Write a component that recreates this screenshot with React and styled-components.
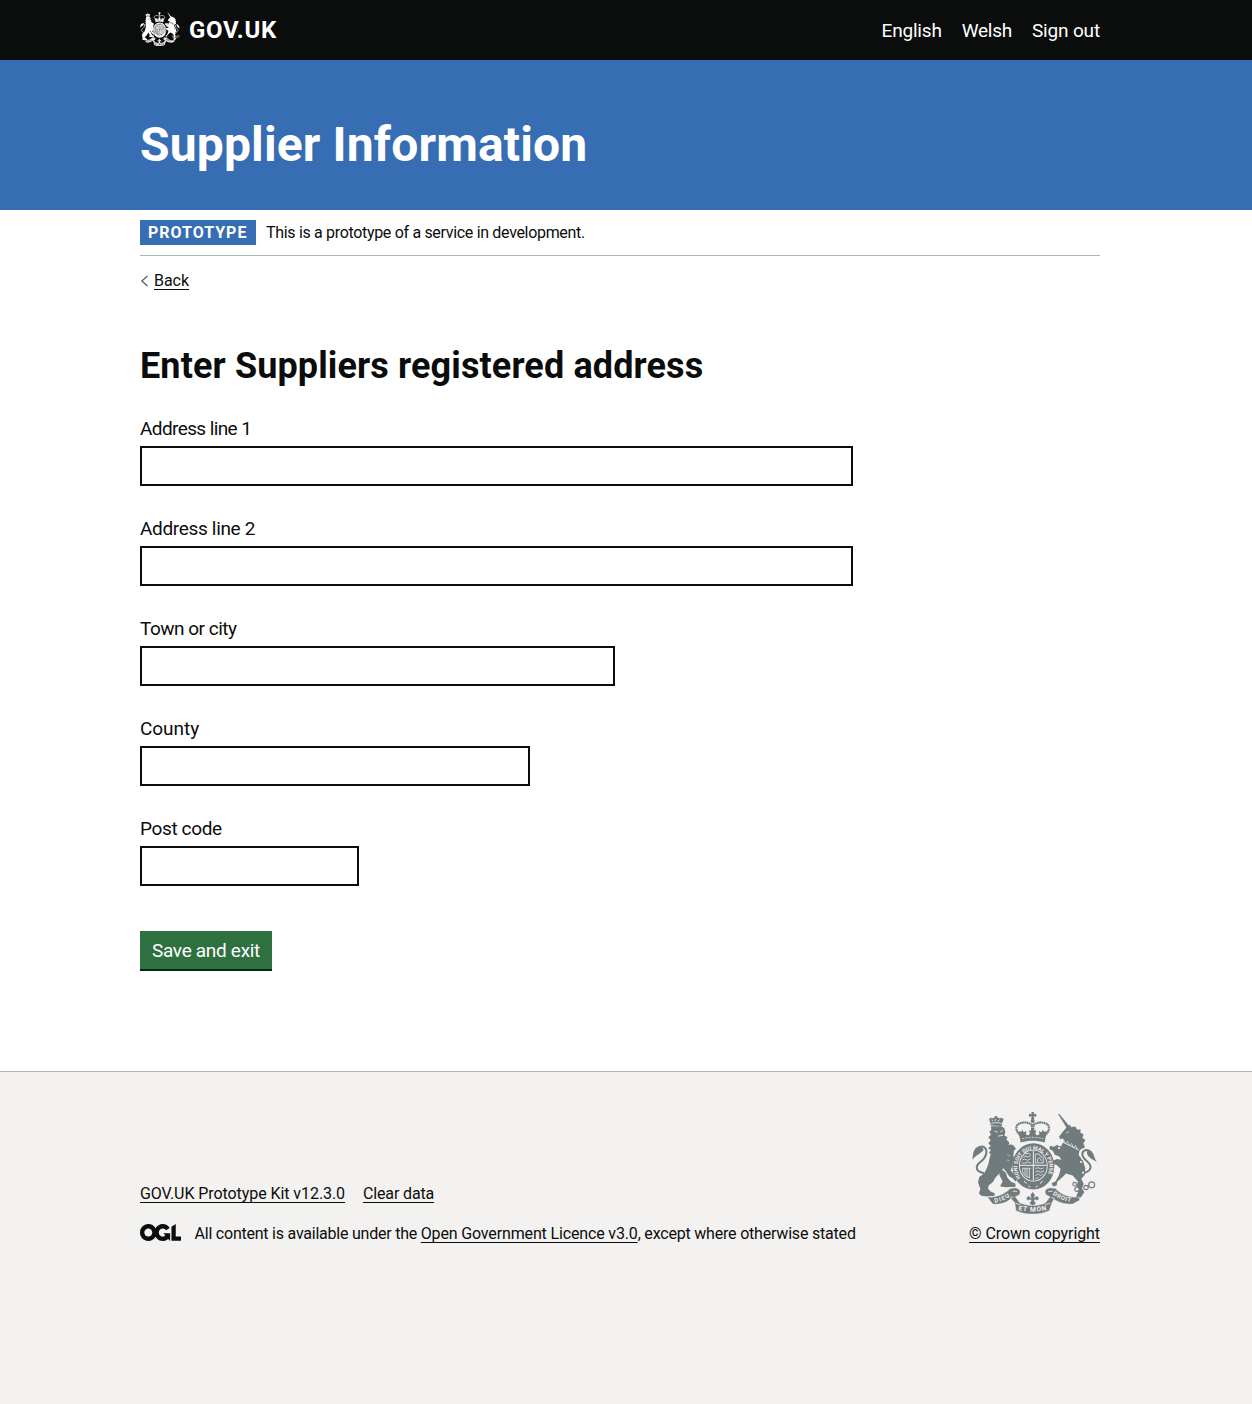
import React from "react";
import styled, { createGlobalStyle } from "styled-components";

const INK = "#0b0c0c";
const BLUE = "#376db3";
const PALE = "#f3f2f1";

const GlobalStyle = createGlobalStyle`
  *, *::before, *::after { box-sizing: border-box; }
  body {
    margin: 0;
    background: ${PALE};
    color: ${INK};
    font-family: Roboto, "Liberation Sans", sans-serif;
    font-size: 19px;
    line-height: 25px;
  }
  a { color: inherit; }
`;

const Page = styled.div`
  min-height: 1404px;
  display: flex;
  flex-direction: column;
`;

const Container = styled.div`
  width: 960px;
  margin-left: 140px;
`;

const Header = styled.header`
  height: 60px;
  background: ${INK};
  color: #fff;
`;

const HeaderRow = styled(Container)`
  height: 60px;
  display: flex;
  justify-content: space-between;
  align-items: center;
`;

const Brand = styled.a`
  display: flex;
  align-items: center;
  gap: 9px;
  text-decoration: none;
`;

const BrandCrest = styled.svg`
  display: block;
  width: 40px;
  height: 34px;
  margin-bottom: 2px;
  color: #fff;
`;

const BrandName = styled.span`
  font-size: 24px;
  font-weight: 700;
  line-height: 30px;
  letter-spacing: 0.7px;
`;

const Nav = styled.nav`
  display: flex;
  gap: 20px;
`;

const NavLink = styled.a`
  text-decoration: none;
  letter-spacing: ${(p) => p.$track}px;
`;

const Banner = styled.div`
  height: 150px;
  background: ${BLUE};
  color: #fff;
  padding-top: 60px;
`;

const BannerTitle = styled.div`
  font-size: 48px;
  line-height: 50px;
  font-weight: 700;
  letter-spacing: 0.15px;
`;

const Body = styled.div`
  background: #fff;
  height: 861px;
`;

const Phase = styled.div`
  height: 46px;
  padding: 10px 0;
  display: flex;
  gap: 10px;
  border-bottom: 1px solid #b1b4b6;
`;

const Tag = styled.strong`
  width: 116px;
  height: 25px;
  padding-left: 8px;
  background: ${BLUE};
  color: #fff;
  font-size: 16px;
  line-height: 25px;
  letter-spacing: 0.98px;
`;

const Small = styled.span`
  font-size: 16px;
  line-height: 25px;
  white-space: pre;
  letter-spacing: ${(p) => p.$track}px;
`;

const Link = styled.a`
  font-size: 16px;
  line-height: 20px;
  white-space: pre;
  letter-spacing: ${(p) => p.$track}px;
  text-decoration: underline;
  text-decoration-thickness: 1px;
  text-underline-offset: 3px;
  text-decoration-skip-ink: none;
`;

const BackRow = styled.div`
  display: flex;
  align-items: center;
  gap: 5px;
  margin-top: 15px;
  height: 20px;
`;

const Chevron = styled.svg`
  width: 9px;
  height: 12px;
`;

const Heading = styled.h1`
  margin: 55px 0 30px;
  font-size: 36px;
  line-height: 40px;
  font-weight: 700;
  letter-spacing: 0.12px;
`;

const Field = styled.div`
  height: 70px;
  margin-bottom: 30px;
`;

const Label = styled.label`
  display: block;
  margin-bottom: 5px;
  letter-spacing: ${(p) => p.$track}px;
`;

const Input = styled.input`
  display: block;
  width: ${(p) => p.$width}px;
  height: 40px;
  padding: 5px;
  border: 2px solid ${INK};
  border-radius: 0;
  background: #fff;
  font: inherit;
`;

const Button = styled.button`
  display: block;
  width: 132px;
  height: 38px;
  margin-top: 45px;
  padding: 1px 0 0;
  border: 0;
  background: #2f7040;
  box-shadow: 0 2px 0 #032917;
  color: #fff;
  font: inherit;
  letter-spacing: -0.3px;
  white-space: nowrap;
`;

const Footer = styled.footer`
  flex: 1;
  border-top: 1px solid #b1b4b6;
  background: ${PALE};
  padding-top: 40px;
`;

const FooterRow = styled(Container)`
  display: flex;
  justify-content: space-between;
  align-items: flex-end;
`;

const Meta = styled.div`
  display: flex;
  flex-direction: column;
  gap: 17px;
`;

const MetaLinks = styled.div`
  display: flex;
  gap: 18px;
`;

const Licence = styled.div`
  display: flex;
  align-items: center;
  height: 25px;
`;

const Ogl = styled.svg`
  width: 41px;
  height: 17px;
  margin: 0 13.6px 3px 0;
`;

const Copyright = styled.div`
  display: flex;
  flex-direction: column;
  align-items: flex-end;
  gap: 10px;
  padding-bottom: 2px;
`;

const FooterCrest = styled.svg`
  display: block;
  width: 125px;
  height: 102px;
  margin-right: 3px;
  color: #717a7d;
`;

function Arms({ as: Svg, paper }) {
  const motto = { fill: paper, fontFamily: "Roboto, sans-serif", fontWeight: 700 };
  return (
    <Svg viewBox="36 36 375 308" preserveAspectRatio="none" fill="currentColor" aria-hidden="true">
      {/* tails */}
      <g fill="none" stroke="currentColor" strokeWidth="6" strokeLinecap="round">
        <path d="M70 220C44 214 46 198 62 186C78 174 86 152 72 142C64 137 53 143 50 151" />
        <path d="M364 222C402 214 394 196 380 184C362 168 364 154 378 151C388 150 396 160 398 168" />
      </g>
      <path d="M37 180C40 166 38 150 52 142C60 138 72 143 70 152C62 160 48 166 37 180Z" />
      <path d="M411 188C404 182 388 176 383 166C378 156 382 150 390 152C402 158 401 172 411 188Z" />

      {/* lion crown */}
      <path d="M91 68L87 58L92 53L99 56L102 52L106 53L104 48H112L110 53L115 52L118 56L125 53L131 58L127 68L125 78L92 77Z" />
      {/* lion */}
      <path d="M93 79L124 79L133 85L136 97L133 107L143 112L139 119L148 128L146 136C154 132 162 136 168 148L162 152L160 168L164 180L159 190L156 202L152 212L162 224L171 231L172 240L166 246L158 236L148 231L138 216L130 206C124 212 122 220 114 226C104 234 104 240 98 248L86 258L84 268L92 276L104 281L104 289L82 291L64 289L57 282L61 268L54 248L58 232L72 222C80 208 86 196 88 178L92 164L87 158L93 151L84 146L92 138L85 130L92 121L85 112L93 105L88 96L94 90Z" />
      <path d="M122 206L138 220L142 234L152 246L166 252L167 262L136 263L120 260L128 246L118 226Z" />
      <g stroke={paper} fill="none" strokeWidth="2.5">
        <path d="M94 71C104 67 115 67 125 71M95 59L99 64M106 57V63M118 59L114 64M104 94L113 97M121 96L129 92M114 109L129 106" />
        <path d="M142 164L150 169M140 180L148 184" strokeWidth="1.5" />
      </g>

      {/* unicorn */}
      <path d="M294 42L298 42L329 80L322 87Z" />
      <path d="M318 84L331 74L333 82L346 80L351 89L362 89L361 98L371 104L367 113L376 121L370 130L375 143L364 148L358 154L356 166L363 176L371 190L376 206L374 226L364 238L371 253L366 266L373 278L362 294L346 296L354 278L348 264L354 246L338 228L318 222L304 236L292 246L290 258L279 261L275 251L287 245L297 226L302 208L290 196L281 193L278 184L290 178L304 180L298 170L284 165L279 154L268 148L270 138L281 141L292 135L301 146L305 135L313 122L307 115L302 119L297 111L307 97Z" />
      <path d="M308 127L357 151" stroke={paper} strokeWidth="2.5" fill="none" />
      <path d="M311 121L316 131L323 125L328 138L335 131L340 144L347 137L352 149" stroke={paper} strokeWidth="2" fill="none" />
      <path d="M319 99L326 96" stroke={paper} strokeWidth="2.5" fill="none" />
      <g fill={paper} stroke="currentColor" strokeWidth="3.5">
        <circle cx="297" cy="145" r="5" />
        <circle cx="363" cy="187" r="5" />
        <circle cx="369" cy="219" r="5" />
        <circle cx="344" cy="254" r="5.5" />
        <circle cx="351" cy="269" r="6.5" />
        <circle cx="378" cy="264" r="6.5" />
        <circle cx="395" cy="256" r="9" />
      </g>

      {/* crown */}
      <path d="M214 36H222L221 43L229 41V50L221 49L223 59H213L215 49L207 50V41L215 43Z" />
      <circle cx="218" cy="63" r="6" />
      <path d="M183 108C166 94 164 76 180 70C194 65 209 68 216 76V104M253 108C270 94 272 76 256 70C242 65 227 68 220 76V104" fill="none" stroke="currentColor" strokeWidth="6.5" strokeDasharray="5.5 1.2" />
      <path d="M176 94L184 96L187 89L191 97L199 93L198 105L207 106L210 98L206 93L213 91L218 84L223 91L230 93L226 98L229 106L238 105L237 93L245 97L249 89L252 96L260 94L254 128C231 121 205 121 182 128Z" />
      <path d="M186 117C206 111 230 111 250 117" stroke={paper} strokeWidth="2" strokeDasharray="7 3" fill="none" />

      {/* garter and shield */}
      <ellipse cx="220" cy="200" rx="63" ry="70" />
      <ellipse cx="220" cy="198" rx="43" ry="48" fill={paper} />
      <ellipse cx="220" cy="198" rx="40.5" ry="45.5" />
      <path d="M220 153V243M180 197H260" stroke={paper} strokeWidth="3" />
      <g stroke={paper} strokeWidth="2.3" fill="none">
        <path d="M190 172L197 169L203 172L212 168M187 181L194 178L202 182L212 177M196 162L205 161L212 164M186 190H198L203 187L213 190" />
        <path d="M226 163H238L242 171L250 173V190H226Z M233 187L232 178L237 174L242 178L245 185" />
        <path d="M188 207C186 221 192 230 210 235M195 207V227M201 207V232M208 207V235M187 206H212" />
        <path d="M226 207L235 204L241 208L251 205M226 217L234 214L241 218L252 214M226 228L235 223L241 228L249 223M226 238L236 233" />
      </g>
      <path id="garter" d="M184 238A48 53 0 1 1 256 238" fill="none" />
      <text fontSize="16" textLength="212" {...motto}>
        <textPath href="#garter" startOffset="4">HONI SOIT QUI MAL Y PENSE</textPath>
      </text>
      <path d="M192 245L200 252M248 245L240 252M206 258L210 264M232 258L228 264" stroke={paper} strokeWidth="3" />

      {/* ribbon */}
      <path d="M82 293C112 294 134 284 150 267L163 265C178 265 186 276 177 287L166 292L180 311C204 321 234 321 256 311L270 292L259 287C250 276 258 265 274 265L287 267C303 285 326 294 356 293L360 302L338 314C314 316 292 308 274 294L284 296L276 310L268 334C238 348 198 348 168 334L164 310L150 294L160 292C144 308 122 317 98 314Z" stroke={paper} strokeWidth="1.5" />
      <path d="M158 275L171 276M265 276L278 275M166 311L180 316M256 316L270 311" stroke={paper} strokeWidth="2.5" />
      <path id="dieu" d="M104 310Q134 306 160 283" fill="none" />
      <path id="mon" d="M173 331Q218 343 265 331" fill="none" />
      <path id="droit" d="M278 284Q302 305 342 309" fill="none" />
      <text fontSize="18" textLength="50" {...motto}><textPath href="#dieu">DIEU</textPath></text>
      <text fontSize="20" textLength="86" {...motto}><textPath href="#mon" startOffset="2">ET MON</textPath></text>
      <text fontSize="18" textLength="60" {...motto}><textPath href="#droit">DROIT</textPath></text>

      {/* fleur-de-lis */}
      <path d="M218 277L225 287L222 297C228 286 238 290 236 299C234 305 229 304 227 300L222 303L228 312L218 319L208 312L214 303L209 300C207 304 202 305 200 299C198 290 208 286 214 297L211 287Z" stroke={paper} strokeWidth="1" />
    </Svg>
  );
}

const FIELDS = [
  { label: "Address line 1", width: 713, track: -0.6 },
  { label: "Address line 2", width: 713, track: -0.33 },
  { label: "Town or city", width: 475, track: -0.5 },
  { label: "County", width: 390, track: -0.05 },
  { label: "Post code", width: 219, track: -0.37 },
];

export default function App() {
  return (
    <Page>
      <GlobalStyle />
      <Header>
        <HeaderRow>
          <Brand>
            <Arms as={BrandCrest} paper={INK} />
            <BrandName>GOV.UK</BrandName>
          </Brand>
          <Nav>
            <NavLink $track={-0.2}>English</NavLink>
            <NavLink $track={-0.25}>Welsh</NavLink>
            <NavLink $track={-0.16}>Sign out</NavLink>
          </Nav>
        </HeaderRow>
      </Header>
      <Banner>
        <Container>
          <BannerTitle>Supplier Information</BannerTitle>
        </Container>
      </Banner>
      <Body>
        <Container>
          <Phase>
            <Tag>PROTOTYPE</Tag>
            <Small $track={-0.32}>This is a prototype of a service in development.</Small>
          </Phase>
          <BackRow>
            <Chevron viewBox="0 0 9 12" fill="none" stroke="#505a5f" strokeWidth="1.2">
              <path d="M7.5 1L1.8 6L7.5 11" />
            </Chevron>
            <Link $track={-0.04}>Back</Link>
          </BackRow>
          <Heading>Enter Suppliers registered address</Heading>
          {FIELDS.map((f, i) => (
            <Field key={f.label}>
              <Label htmlFor={`field-${i}`} $track={f.track}>{f.label}</Label>
              <Input id={`field-${i}`} $width={f.width} />
            </Field>
          ))}
          <Button type="button">Save and exit</Button>
        </Container>
      </Body>
      <Footer>
        <FooterRow>
          <Meta>
            <MetaLinks>
              <Link $track={-0.07}>GOV.UK Prototype Kit v12.3.0</Link>
              <Link $track={-0.15}>Clear data</Link>
            </MetaLinks>
            <Licence>
              <Ogl viewBox="0 0 483.2 195.7" preserveAspectRatio="none" fill={INK} aria-hidden="true">
                <path d="M421.5 142.8V.1l-50.7 32.3v161.1h112.4v-50.7zm-122.3-9.6A47.12 47.12 0 0 1 221 97.8c0-26 21.1-47.1 47.1-47.1 16.7 0 31.4 8.7 39.7 21.8l42.7-27.2A97.63 97.63 0 0 0 268.1 0c-36.5 0-68.3 20.1-85.1 49.7A98 98 0 0 0 97.8 0C43.9 0 0 43.9 0 97.8s43.9 97.8 97.8 97.8c36.5 0 68.3-20.1 85.1-49.7a97.76 97.76 0 0 0 149.6 25.4l19.4 22.2h3v-87.8h-80l24.3 27.5zM97.8 145c-26 0-47.1-21.1-47.1-47.1s21.1-47.1 47.1-47.1 47.1 21.1 47.1 47.1S123.8 145 97.8 145" />
              </Ogl>
              <Small $track={-0.23}>{"All content is available under the "}</Small>
              <Link $track={-0.15}>Open Government Licence v3.0</Link>
              <Small $track={-0.2}>, except where otherwise stated</Small>
            </Licence>
          </Meta>
          <Copyright>
            <Arms as={FooterCrest} paper={PALE} />
            <Link $track={-0.09}>© Crown copyright</Link>
          </Copyright>
        </FooterRow>
      </Footer>
    </Page>
  );
}
